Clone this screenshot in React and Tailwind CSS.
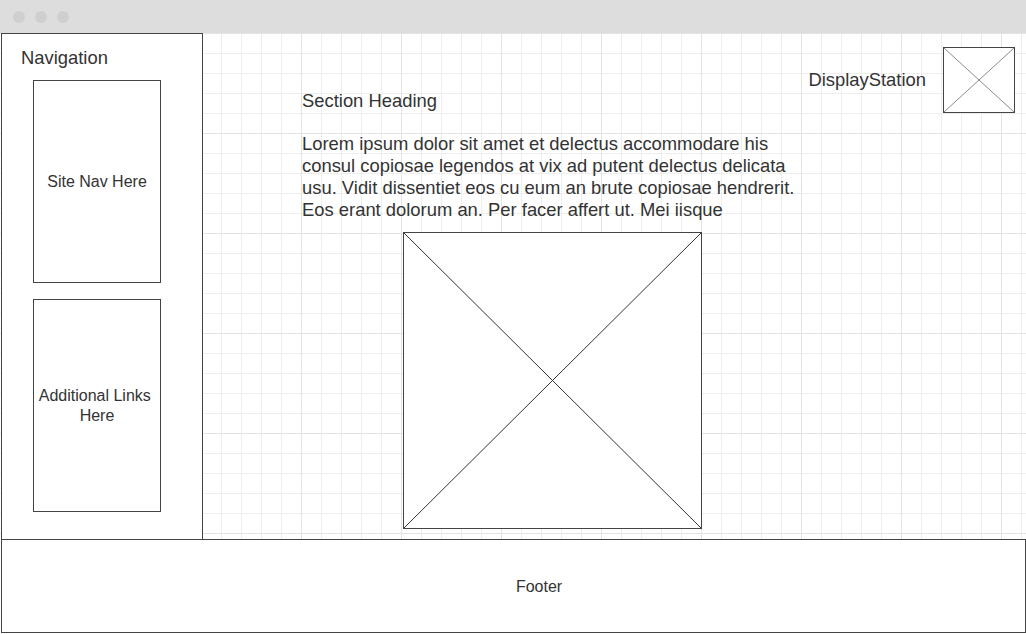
const Placeholder = ({ className, stroke }) => (
  <div className={`border border-[#444444] bg-white ${className}`}>
    <svg className="w-full h-full block" viewBox="0 0 100 100" preserveAspectRatio="none">
      <line x1="0" y1="0" x2="100" y2="100" stroke={stroke} strokeWidth="1" vectorEffect="non-scaling-stroke" />
      <line x1="100" y1="0" x2="0" y2="100" stroke={stroke} strokeWidth="1" vectorEffect="non-scaling-stroke" />
    </svg>
  </div>
);

const App = () => {
  return (
    <div className="w-[1026px] h-[634px] bg-white flex flex-col overflow-hidden font-['Liberation_Sans',Arial,sans-serif] text-[#333333]">
      {/* Window title bar */}
      <div className="h-[33px] shrink-0 bg-[#dddddd] flex items-center gap-[10px] pl-[13px]">
        <span className="w-3 h-3 rounded-full bg-[#cfcfcf]" />
        <span className="w-3 h-3 rounded-full bg-[#cfcfcf]" />
        <span className="w-3 h-3 rounded-full bg-[#cfcfcf]" />
      </div>

      {/* Body with grid paper */}
      <div className="h-[506px] shrink-0 flex bg-white bg-[image:linear-gradient(to_right,#e3e3e3_1px,transparent_1px),linear-gradient(to_bottom,#e3e3e3_1px,transparent_1px),linear-gradient(to_right,#eeeeee_1px,transparent_1px),linear-gradient(to_bottom,#eeeeee_1px,transparent_1px)] bg-[size:100px_100px,100px_100px,20px_20px,20px_20px] bg-[position:1px_0px]">
        {/* Navigation */}
        <aside className="ml-[1px] w-[202px] shrink-0 bg-white border-t border-l border-r border-[#444444] pt-[13px]">
          <p className="pl-[19px] text-[18.4px] leading-[22px]">Navigation</p>
          <div className="mt-[11px] ml-[31px] flex flex-col gap-[16px]">
            <div className="w-[128px] h-[203px] border border-[#444444] bg-white flex items-center justify-center text-center text-[16px] leading-[20px]">
              Site Nav Here
            </div>
            <div className="w-[128px] h-[213px] border border-[#444444] bg-white flex items-center justify-center text-center text-[16px] leading-[20px]">
              Additional Links{"\u00a0"}
              <br />
              Here
            </div>
          </div>
        </aside>

        {/* Main content */}
        <main className="flex-1 flex">
          <div className="w-[500px] shrink-0 ml-[99px] pt-[57px]">
            <h2 className="text-[18.4px] leading-[21.7px] font-normal">Section Heading</h2>
            <p className="mt-[21.7px] text-[18.4px] leading-[21.7px]">
              Lorem ipsum dolor sit amet et delectus accommodare his consul copiosae legendos at vix ad putent delectus delicata usu. Vidit dissentiet eos cu eum an brute copiosae hendrerit. Eos erant dolorum an. Per facer affert ut. Mei iisque
            </p>
            <Placeholder className="mt-[12px] ml-[101px] w-[299px] h-[297px]" stroke="#333333" />
          </div>
          <div className="flex-1 flex justify-end items-start pt-[14px] pr-[11px]">
            <div className="flex items-center gap-[17px]">
              <span className="text-[18.4px] leading-[22px] pb-[1px]">DisplayStation</span>
              <Placeholder className="w-[72px] h-[66px]" stroke="#8a8a8a" />
            </div>
          </div>
        </main>
      </div>

      {/* Footer */}
      <footer className="ml-[1px] w-[1025px] h-[94px] shrink-0 bg-white border border-[#444444] flex items-center justify-center pl-[51px] pt-[2px] text-[16px]">
        Footer
      </footer>
    </div>
  );
};

export default App;
